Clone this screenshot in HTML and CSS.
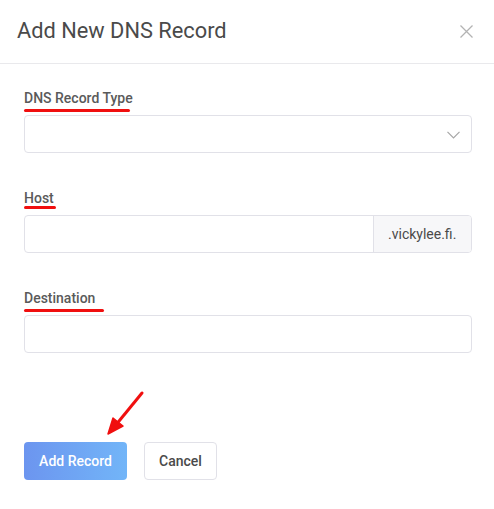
FILE: index.html
```html
<!DOCTYPE html>
<html lang="en">
<head>
<meta charset="utf-8">
<title>Add New DNS Record</title>
<link rel="stylesheet" href="styles.css">
</head>
<body>
<div class="modal">
  <header class="modal-header">
    <h1 class="modal-title">Add New DNS Record</h1>
    <button class="close" aria-label="Close">
      <svg width="13" height="13" viewBox="0 0 13 13"><path d="M0.5 0.5 L12.5 12.5 M12.5 0.5 L0.5 12.5" stroke="#b3b3b3" stroke-width="1.3" fill="none"/></svg>
    </button>
  </header>
  <div class="modal-body">
    <div class="group">
      <label class="label">DNS Record Type</label>
      <span class="mark mark-type"></span>
      <div class="control select">
        <svg class="chevron" width="13" height="8" viewBox="0 0 13 8"><path d="M0.5 0.8 L6.5 6.8 L12.5 0.8" stroke="#a6a6a6" stroke-width="1.2" fill="none"/></svg>
      </div>
    </div>
    <div class="group">
      <label class="label">Host</label>
      <span class="mark mark-host"></span>
      <div class="control input-group">
        <div class="input-fill"></div>
        <div class="addon">.vickylee.fi.</div>
      </div>
    </div>
    <div class="group">
      <label class="label">Destination</label>
      <span class="mark mark-dest"></span>
      <div class="control"></div>
    </div>
    <div class="actions">
      <button class="btn btn-primary">Add Record</button>
      <button class="btn btn-default">Cancel</button>
      <svg class="arrow" width="40" height="50" viewBox="0 0 40 50"><path d="M37 3 L10 36" stroke="#f00f0f" stroke-width="3" stroke-linecap="round" fill="none"/><path d="M3 44 L8 28 L18 36 Z" fill="#f00f0f" stroke="#f00f0f" stroke-width="1.5" stroke-linejoin="round"/></svg>
    </div>
  </div>
</div>
</body>
</html>
```
FILE: styles.css
```css
* { box-sizing: border-box; }
html, body { margin: 0; padding: 0; background: #fff; }
body {
  font-family: Roboto, "Liberation Sans", Arial, sans-serif;
  color: #4a4a4a;
  width: 494px;
  height: 509px;
  overflow: hidden;
}
.modal { position: relative; width: 494px; height: 509px; }
.modal-header {
  height: 64px;
  border-bottom: 1px solid #e9e9ec;
  display: flex;
  align-items: center;
  justify-content: space-between;
  padding: 0 21px 0 17px;
}
.modal-title {
  margin: 0 0 2px;
  font-size: 21.8px;
  font-weight: 400;
  color: #4a4a4a;
  line-height: 24px;
}
.close {
  border: 0;
  background: none;
  padding: 0;
  width: 13px;
  height: 13px;
  display: block;
  margin-top: 0;
}
.close svg { display: block; }
.modal-body {
  padding: 26px 22px 0 24px;
  display: flex;
  flex-direction: column;
}
.group {
  display: flex;
  flex-direction: column;
  height: 100px;
}
.label {
  font-size: 14px;
  font-weight: 500;
  line-height: 16px;
  color: #5a5a5a;
}
.mark {
  display: block;
  height: 3px;
  background: #f00f0f;
  border-radius: 2px;
  margin-top: 3px;
}
.mark-type { width: 106px; }
.mark-host { width: 32px; margin-top: 0; margin-bottom: 3px; }
.mark-dest { width: 80px; }
.control {
  margin-top: 3px;
  height: 38px;
  border: 1px solid #e1e1e8;
  border-radius: 4px;
  background: #fff;
}
.select {
  display: flex;
  align-items: center;
  justify-content: flex-end;
  padding-right: 11px;
}
.chevron { display: block; margin-top: 1px; }
.input-group {
  display: flex;
  overflow: hidden;
}
.input-fill { flex: 1; }
.addon {
  width: 98px;
  border-left: 1px solid #e1e1e8;
  background: #f7f7f9;
  font-size: 14px;
  color: #4a4a4a;
  display: flex;
  align-items: center;
  padding-left: 14px;
}
.actions {
  position: relative;
  margin-top: 52px;
  display: flex;
  gap: 17px;
}
.btn {
  height: 38px;
  border-radius: 4px;
  font-family: Roboto, "Liberation Sans", Arial, sans-serif;
  font-size: 14px;
  padding: 0;
}
.btn-primary {
  width: 103px;
  border: 0;
  color: #fff;
  font-weight: 500;
  background: linear-gradient(90deg, #6c95ef 0%, #72b5f8 100%);
}
.btn-default {
  width: 73px;
  border: 1px solid #e1e1e8;
  background: #fff;
  color: #4a4a4a;
  font-weight: 500;
}
.arrow {
  position: absolute;
  left: 81px;
  top: -52px;
}
```
